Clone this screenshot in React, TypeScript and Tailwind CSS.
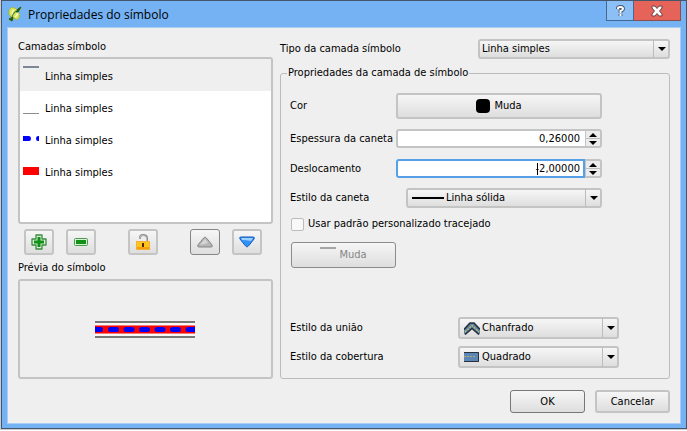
import type { ReactNode } from "react";

const frame = "border-2 border-[#c4c4c4] rounded-[3px]";
const buttonFace = "bg-linear-to-b from-[#f6f6f6] to-[#dedede] border-2 border-[#c4c4c4] rounded-[3px]";

function Arrow({ up = false }: { up?: boolean }) {
  return (
    <svg width="8" height="4" viewBox="0 0 8 4" aria-hidden="true">
      <path d={up ? "M0 4L4 0L8 4Z" : "M0 0H8L4 4Z"} fill="#000" />
    </svg>
  );
}

function Combo({ id, value, icon, className, pad }: { id: string; value: string; icon?: ReactNode; className: string; pad: string }) {
  return (
    <div className={`relative ${className}`}>
      <select id={id} defaultValue={value} className={`block h-full w-full appearance-none ${buttonFace} ${pad}`}>
        <option>{value}</option>
      </select>
      {icon && <span className="pointer-events-none absolute inset-y-0 left-[6px] flex items-center">{icon}</span>}
      <span className="pointer-events-none absolute inset-y-px right-px flex w-4 items-center justify-center border-l border-[#bcbcbc]">
        <Arrow />
      </span>
    </div>
  );
}

function Spin({ id, value, focused = false }: { id: string; value: string; focused?: boolean }) {
  return (
    <div className="relative flex h-[19px] w-[206px]">
      <input
        id={id}
        defaultValue={value}
        className={`h-[19px] min-w-0 flex-1 rounded-l-[3px] border-2 bg-white text-right outline-none ${focused ? "border-[#55a0e8] pr-[3px]" : "border-r-0 border-[#c4c4c4] pr-[5px]"}`}
      />
      {focused && <span className="absolute top-[4px] right-[64px] h-3 w-px bg-black" />}
      <div className="flex w-[17px] flex-col rounded-r-[3px] border-2 border-l border-[#c4c4c4] bg-[#ececec]">
        <button type="button" aria-label="Aumentar" className="flex flex-1 items-center justify-center border-b border-[#bcbcbc]">
          <Arrow up />
        </button>
        <button type="button" aria-label="Diminuir" className="flex flex-1 items-center justify-center">
          <Arrow />
        </button>
      </div>
    </div>
  );
}

function ToolButton({ label, children, dark = false, className = "" }: { label: string; children: ReactNode; dark?: boolean; className?: string }) {
  return (
    <button
      type="button"
      aria-label={label}
      className={`flex h-[26px] w-[30px] items-center justify-center rounded-[3px] bg-linear-to-b from-[#f6f6f6] to-[#dedede] ${dark ? "border border-[#858585]" : "border-2 border-[#c4c4c4]"} ${className}`}
    >
      {children}
    </button>
  );
}

const layers: { key: string; swatch: ReactNode }[] = [
  { key: "upper", swatch: <path d="M0 1H16V3H0Z" fill="#7d8894" /> },
  { key: "lower", swatch: <path d="M0 16H16V17H0Z" fill="#8c8c8c" /> },
  {
    key: "dashes",
    swatch: <path d="M0 7H6Q8 7 8 9.500Q8 12 6 12H0ZM16 7H15Q13 7 13 9.500Q13 12 15 12H16Z" fill="#0000ff" />,
  },
  { key: "band", swatch: <path d="M0 6H16V14H0Z" fill="#ff0000" /> },
];

export default function App() {
  return (
    <div className="border-b border-l border-[#c9ced4] font-['DejaVu_Sans_Condensed','Noto_Sans',sans-serif] text-[11px] leading-[14px] text-black">
      <div className="border border-[#43566b] bg-[#74b2f3] px-[5px] pb-1">
        <header className="flex h-[26px] items-start justify-between pl-px">
          <div className="flex h-[26px] items-center gap-[6px]">
            <svg width="14" height="16" viewBox="0 0 14 16" aria-hidden="true">
              <path d="M1 4Q3 0 7 2L9 4L12 1L13 3L10 6Q13 8 11 12Q9 15 6 12L4 15L1 14L3 11Q0 9 1 4Z" fill="#d9e552" stroke="#8fa83a" strokeWidth=".6" />
              <path d="M5 10Q3 6 6 4M7 11Q10 9 9 6" fill="none" stroke="#f7fbd8" strokeWidth="1.400" />
              <path d="M4 11Q5 7 8 5" fill="none" stroke="#4b8a2c" strokeWidth="1.200" />
              <path d="M1 13L4 15L5 11ZM8 6L10 3L13 1L10 6Z" fill="#1f5a1a" stroke="#1f5a1a" />
            </svg>
            <h1 className="pt-[2px] font-['Open_Sans'] text-[12px] leading-[18px]">Propriedades do símbolo</h1>
          </div>
          <div className="flex h-5">
            <button type="button" aria-label="Ajuda" className="flex w-7 items-center justify-center border border-t-0 border-[#416994] bg-[#8bbff6]">
              <svg width="9" height="12" viewBox="0 0 9 12" aria-hidden="true">
                <path d="M2 4V3Q2 2 4.500 2Q7 2 7 4Q7 5 4.500 6V8M4.500 9V11" fill="none" stroke="#405268" strokeWidth="3.800" />
                <path d="M2 4V3Q2 2 4.500 2Q7 2 7 4Q7 5 4.500 6V8M4.500 9V11" fill="none" stroke="#fff" strokeWidth="2" />
              </svg>
            </button>
            <button type="button" aria-label="Fechar" className="flex w-[47px] items-center justify-center border border-t-0 border-l-0 border-[#87504f] bg-[#e66359]">
              <svg width="12" height="12" viewBox="0 0 12 12" aria-hidden="true">
                <path d="M1 1H4L6 3.500L8 1H11V3L8.500 6L11 9V11H8L6 8.500L4 11H1V9L3.500 6L1 3Z" fill="#fff" stroke="#6b4346" />
              </svg>
            </button>
          </div>
        </header>

        <main className="border border-[#a9cdf3] bg-[#efefef] px-[10px] pt-[11px] pb-[10px]">
          <div className="flex gap-[7px]">
            <section className="w-[255px] shrink-0">
              <h2 className="mb-[3px] pt-px">Camadas símbolo</h2>
              <ul className={`h-[167px] bg-white ${frame}`}>
                {layers.map((layer) => (
                  <li key={layer.key} className="flex h-8 items-center gap-[6px] pl-[3px] first:bg-[#efefef]">
                    <svg width="16" height="20" viewBox="0 0 16 20" aria-hidden="true">
                      {layer.swatch}
                    </svg>
                    <span className="pt-[3px]">Linha simples</span>
                  </li>
                ))}
              </ul>
              <div className="mt-[5px] flex px-[6px]">
                <ToolButton label="Adicionar camada">
                  <svg width="16" height="16" viewBox="0 0 16 16" aria-hidden="true">
                    <path d="M5 1H11V5H15V11H11V15H5V11H1V5H5Z" fill="#d7f0d4" stroke="#3c8c43" strokeWidth="1.300" strokeLinejoin="round" />
                    <path d="M6.500 3H9.500V6.500H13V9.500H9.500V13H6.500V9.500H3V6.500H6.500Z" fill="#139018" />
                  </svg>
                </ToolButton>
                <ToolButton label="Remover camada" className="ml-3">
                  <svg width="16" height="16" viewBox="0 0 16 16" aria-hidden="true">
                    <rect x="1.500" y="4.500" width="13" height="7" rx="1" fill="#d7f0d4" stroke="#4b9a51" />
                    <path d="M3 6H13V10H3Z" fill="#139018" />
                  </svg>
                </ToolButton>
                <ToolButton label="Bloquear cor" className="ml-8">
                  <svg width="16" height="16" viewBox="0 0 16 16" aria-hidden="true">
                    <path d="M5 5V3.500Q5 1 8 1Q12 1 12 4V7" fill="none" stroke="#8e8e8e" strokeWidth="2" />
                    <path d="M5 5V3.500Q5 1.500 8 1.500Q11.500 1.500 11.500 4V7" fill="none" stroke="#d2d2d2" strokeWidth=".7" />
                    <rect x="1.500" y="7.500" width="13" height="8" fill="#ffc51b" stroke="#f2b23c" />
                    <path d="M2 13H14V15H2Z" fill="#f59f0c" />
                    <path d="M7 9H9V13H7Z" fill="#4e2500" />
                  </svg>
                </ToolButton>
                <ToolButton label="Mover para cima" dark className="ml-8">
                  <svg width="16" height="12" viewBox="0 0 16 12" aria-hidden="true">
                    <path d="M8 1Q9 1 15 9Q16 11 14 11H2Q0 11 1 9Q7 1 8 1Z" fill="#b6b6b6" stroke="#858585" />
                    <path d="M3 9Q7 4 8 3L11 7Z" fill="#d6d6d6" />
                  </svg>
                </ToolButton>
                <ToolButton label="Mover para baixo" className="ml-3">
                  <svg width="16" height="12" viewBox="0 0 16 12" aria-hidden="true">
                    <path d="M2 1H14Q16 1 15 3Q9 11 8 11Q7 11 1 3Q0 1 2 1Z" fill="#3291f8" stroke="#1558b8" />
                    <path d="M2 2H14L12 5Q7 4 3 4Z" fill="#9bd0ff" />
                  </svg>
                </ToolButton>
              </div>
              <h2 className="mt-[6px] mb-1">Prévia do símbolo</h2>
              <div className={`flex h-[100px] items-center justify-center ${frame}`}>
                <svg width="101" height="17" viewBox="0 0 101 17" role="img" aria-label="Prévia do símbolo">
                  <path d="M0 0H100V2H0ZM0 15H100V17H0Z" fill="#777" />
                  <path d="M0 2H100V4H0ZM0 13H100V15H0Z" fill="#f8f8f8" />
                  <path d="M0 4.500H100V12.500H0Z" fill="#f00" />
                  <path d="M-3 8.500H5.500M15.500 8.500H21.500M31 8.500H37M46.500 8.500H52.500M62 8.500H68M77.500 8.500H83.500M93 8.500H100" stroke="#0000ff" strokeWidth="5" strokeLinecap="round" />
                  <path d="M100 4H101V13H100Z" fill="#efefef" />
                </svg>
              </div>
            </section>

            <section className="min-w-0 flex-1">
              <div className="flex items-center justify-between">
                <label htmlFor="tipo">Tipo da camada símbolo</label>
                <Combo id="tipo" value="Linha simples" className="h-5 w-[192px]" pad="pl-[2px]" />
              </div>
              <fieldset className="mt-[7px] h-[313px] rounded-[3px] border border-[#bcbcbc] pl-[9px]">
                <legend className="ml-[-3px] px-px leading-[14px]">Propriedades da camada de símbolo</legend>
                <div className="w-[312px]">
                  <div className="mt-[13px] flex items-center justify-between">
                    <span>Cor</span>
                    <button type="button" className={`flex h-[26px] w-[206px] items-center justify-center gap-1 ${buttonFace}`}>
                      <span className="size-[14px] rounded-[4px] bg-black" />
                      Muda
                    </button>
                  </div>
                  <div className="mt-[10px] flex items-center justify-between">
                    <label htmlFor="espessura">Espessura da caneta</label>
                    <Spin id="espessura" value="0,26000" />
                  </div>
                  <div className="mt-[11px] flex items-center justify-between">
                    <label htmlFor="deslocamento">Deslocamento</label>
                    <Spin id="deslocamento" value="-2,00000" focused />
                  </div>
                  <div className="mt-[10px] flex items-center justify-between">
                    <label htmlFor="caneta">Estilo da caneta</label>
                    <Combo id="caneta" value="Linha sólida" className="h-5 w-[196px]" pad="pl-[38px]" icon={<span className="h-[2px] w-8 bg-black" />} />
                  </div>
                  <label className="mt-[9px] flex items-center gap-1">
                    <input type="checkbox" className="ml-px size-[13px] appearance-none rounded-[2px] border border-[#bcbcbc] bg-[#f8f8f8]" />
                    Usar padrão personalizado tracejado
                  </label>
                  <button type="button" disabled className="mt-[11px] ml-px flex h-[26px] w-[105px] items-center justify-center gap-[3px] rounded-[3px] border border-[#8c8c8c] bg-linear-to-b from-[#f6f6f6] to-[#dedede] text-[#858585]">
                    <span className="mb-[14px] h-[2px] w-4 bg-[#a5a5a5]" />
                    Muda
                  </button>
                </div>
                <div className="mt-[49px] flex w-[329px] items-center justify-between">
                  <label htmlFor="uniao">Estilo da união</label>
                  <Combo
                    id="uniao"
                    value="Chanfrado"
                    className="h-[22px] w-[161px]"
                    pad="pl-[22px]"
                    icon={
                      <svg width="16" height="14" viewBox="0 0 16 14" aria-hidden="true">
                        <path d="M0 8.500L6 2H10L16 8.500V13H14L8 7.500L2 13H0Z" fill="#5a84ad" />
                        <path d="M0 8.500L6 2H10L16 8.500M1 13.500L8 7.500L15 13.500" fill="none" stroke="#28303b" strokeWidth="1.600" />
                        <path d="M1 11L8 4.500L15 11" fill="none" stroke="#d0bc4b" strokeWidth="1.200" strokeDasharray="2 1" />
                      </svg>
                    }
                  />
                </div>
                <div className="mt-[7px] flex w-[329px] items-center justify-between">
                  <label htmlFor="cobertura">Estilo da cobertura</label>
                  <Combo
                    id="cobertura"
                    value="Quadrado"
                    className="h-[22px] w-[161px]"
                    pad="pl-[22px]"
                    icon={
                      <svg width="16" height="12" viewBox="0 0 16 12" aria-hidden="true">
                        <path d="M0 1H15V11H0Z" fill="#5b86b6" />
                        <path d="M0 1.500H14.500V10.500H0" fill="none" stroke="#28303b" />
                        <path d="M0 5.500H11" stroke="#b5aa6a" strokeDasharray="2 1" />
                      </svg>
                    }
                  />
                </div>
              </fieldset>
            </section>
          </div>
          <footer className="mt-[11px] flex justify-end gap-[10px]">
            <button type="button" className="h-[23px] w-[75px] rounded-[3px] border border-[#777] bg-linear-to-b from-[#f6f6f6] to-[#dedede]">
              OK
            </button>
            <button type="button" className={`h-[23px] w-[75px] ${buttonFace}`}>
              Cancelar
            </button>
          </footer>
        </main>
      </div>
    </div>
  );
}
